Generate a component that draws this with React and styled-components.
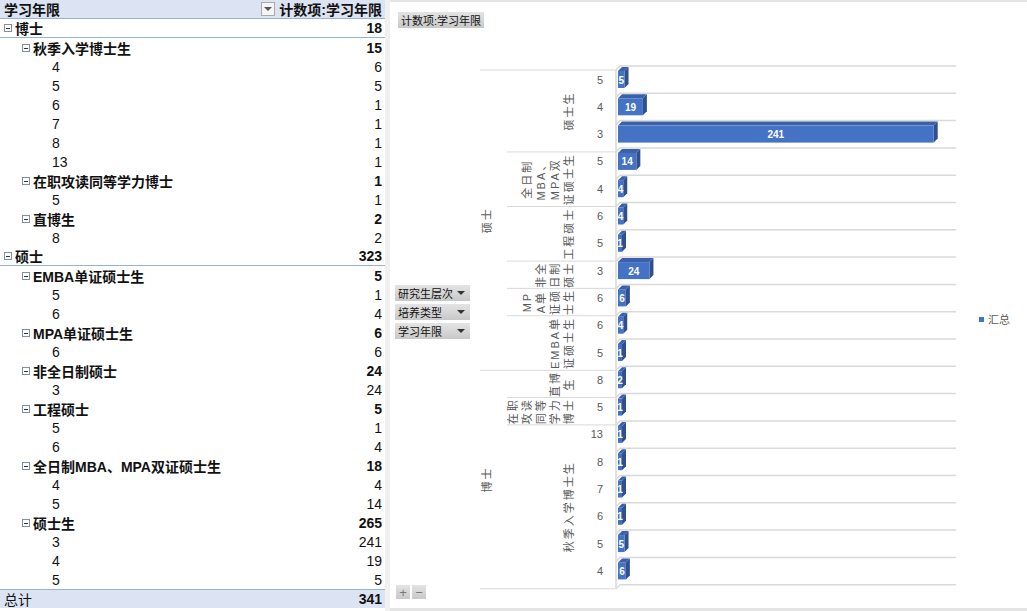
import React from "react";
import styled, { createGlobalStyle } from "styled-components";

const Global = createGlobalStyle`
  html,body{margin:0;padding:0;background:#fff;}
  body{font-family:"Liberation Sans","Noto Sans CJK SC",sans-serif;}
  #root{width:1027px;height:611px;overflow:hidden;}
`;

const Page = styled.div`display:flex;width:1027px;height:611px;`;
const Table = styled.div`width:385px;display:flex;flex-direction:column;border-right:5px solid #f0f0f0;box-sizing:content-box;`;
const Row = styled.div`
  height:19px;display:flex;align-items:center;font-size:14px;color:#111;
  padding-left:${p => p.$indent}px;padding-right:3px;box-sizing:border-box;
  font-weight:${p => (p.$bold ? 700 : 400)};
  background:${p => (p.$head ? "#dce3f2" : "#fff")};
  border-bottom:${p => (p.$line ? "1px solid #95b3d7" : "none")};
  border-top:${p => (p.$top ? "1px solid #95b3d7" : "none")};
`;
const Label = styled.span`flex:1;white-space:nowrap;`;
const Val = styled.span`text-align:right;`;
const Toggle = styled.span`
  width:8px;height:8px;border:1px solid #7f8fa8;margin-right:3px;position:relative;box-sizing:border-box;
  &::after{content:"";position:absolute;left:1px;right:1px;top:3px;height:1px;background:#333;}
`;
const Drop = styled.span`
  width:14px;height:14px;border:1px solid #aaa;background:#f5f5f5;margin-right:4px;display:flex;align-items:center;justify-content:center;box-sizing:border-box;
  &::after{content:"";border:4px solid transparent;border-top:4px solid #555;margin-top:4px;}
`;

const Chart = styled.div`flex:1;position:relative;border-top:2px solid #e4e4e4;border-bottom:3px solid #e4e4e4;`;
const FieldBtn = styled.div`
  position:absolute;left:${p => p.$x}px;top:${p => p.$y}px;width:${p => p.$w}px;height:16px;white-space:nowrap;
  background:linear-gradient(#e4e4e4,#c8c8c8);font-size:11px;color:#111;display:flex;align-items:center;padding-left:3px;box-sizing:border-box;
`;
const Arrow = styled.span`margin-left:auto;margin-right:5px;border:4px solid transparent;border-top:4px solid #333;margin-top:4px;`;

const rows = [
  ["博士",18,0,1],["秋季入学博士生",15,1],["4",6,2],["5",5,2],["6",1,2],["7",1,2],["8",1,2],["13",1,2],
  ["在职攻读同等学力博士",1,1],["5",1,2],["直博生",2,1],["8",2,2],
  ["硕士",323,0,1],["EMBA单证硕士生",5,1],["5",1,2],["6",4,2],["MPA单证硕士生",6,1],["6",6,2],
  ["非全日制硕士",24,1],["3",24,2],["工程硕士",5,1],["5",1,2],["6",4,2],
  ["全日制MBA、MPA双证硕士生",18,1],["4",4,2],["5",14,2],["硕士生",265,1],["3",241,2],["4",19,2],["5",5,2],
];

const bars = [5,19,241,14,4,4,1,24,6,4,1,2,1,1,1,1,1,5,6];
const l2 = ["5","4","3","5","4","6","5","3","6","6","5","8","5","13","8","7","6","5","4"];
const l1 = [
  [3,["硕士生"]],[2,["全日制","MBA、","MPA双","证硕士生"]],[2,["工程硕士"]],[1,["非全","日制","硕士"]],
  [1,["MP","A单","证硕","士生"]],[2,["EMBA单","证硕士生"]],[1,["直博","生"]],[1,["在职","攻读","同等","学力","博士"]],[6,["秋季入学博士生"]],
];
const OX = 226, TOP = 64, H = 27.3;

function ChartSvg() {
  const els = [];
  const gx0 = OX + 4, gx1 = 566;
  for (let i = 0; i <= 19; i++) {
    const y = TOP + i * H;
    els.push(<polyline key={"g"+i} points={`${OX},${y+4} ${gx0},${y} ${gx1},${y}`} fill="none" stroke="#d9d9d9" strokeWidth="1.5"/>);
  }
  els.push(<line key="ax" x1={OX} y1={TOP+4} x2={OX} y2={TOP+19*H+4} stroke="#d9d9d9" strokeWidth="1.5"/>);
  els.push(<line key="b0" x1={90} y1={TOP+4} x2={OX} y2={TOP+4} stroke="#d9d9d9"/>);
  els.push(<line key="b1" x1={90} y1={TOP+19*H+4} x2={OX} y2={TOP+19*H+4} stroke="#d9d9d9"/>);
  els.push(<line key="b2" x1={90} y1={TOP+11*H+4} x2={OX} y2={TOP+11*H+4} stroke="#d9d9d9"/>);
  let idx = 0;
  l1.forEach(([n, lines], k) => {
    const y0 = TOP + idx * H + 4, y1 = TOP + (idx + n) * H + 4;
    if (k > 0 && idx !== 11) els.push(<line key={"l1"+k} x1={117} y1={y0} x2={OX} y2={y0} stroke="#d9d9d9"/>);
    const cy = (y0 + y1) / 2;
    const xr = 183;
    lines.slice().reverse().forEach((t, j) => {
      const x = xr - j * 14;
      els.push(<text key={"t"+k+"_"+j} x={x} y={cy} transform={`rotate(-90 ${x} ${cy})`} textAnchor="middle" fontSize="11" letterSpacing="2" fill="#595959">{t}</text>);
    });
    idx += n;
  });
  [["硕士",0,11],["博士",11,19]].forEach(([t,a,b]) => {
    const cy = TOP + (a+b)/2*H + 4, x = 101;
    els.push(<text key={t} x={x} y={cy} transform={`rotate(-90 ${x} ${cy})`} textAnchor="middle" fontSize="11" letterSpacing="2" fill="#595959">{t}</text>);
  });
  bars.forEach((v, i) => {
    const y = TOP + i * H + 5, h = 17, x = OX + 2, w = Math.max(4, v * 1.31);
    const cy = y + h / 2 + 4;
    els.push(<text key={"n"+i} x={213} y={cy} textAnchor="end" fontSize="11" fill="#595959">{l2[i]}</text>);
    els.push(<polygon key={"s"+i} points={`${x+w},${y} ${x+w+4},${y-4} ${x+w+4},${y+h-4} ${x+w},${y+h}`} fill="#2f4f8f"/>);
    els.push(<polygon key={"tp"+i} points={`${x},${y} ${x+4},${y-4} ${x+w+4},${y-4} ${x+w},${y}`} fill="#3a60a8"/>);
    els.push(<rect key={"r"+i} x={x} y={y} width={w} height={h} fill="#4472c4"/>);
    els.push(<text key={"v"+i} x={x + w/2} y={cy} textAnchor="middle" fontSize="10" fontWeight="700" fill="#fff">{v}</text>);
  });
  els.push(<rect key="lg" x={589} y={315} width={5} height={5} fill="#4472c4"/>);
  els.push(<text key="lt" x={598} y={322} fontSize="11" fill="#595959">汇总</text>);
  return <svg width="637" height="606" style={{position:"absolute",left:0,top:0}}>{els}</svg>;
}

const PM = styled.div`position:absolute;left:${p=>p.$x}px;top:583px;width:14px;height:14px;background:linear-gradient(#e4e4e4,#c8c8c8);color:#777;font-size:13px;display:flex;align-items:center;justify-content:center;`;

export default function App() {
  return (
    <Page>
      <Global/>
      <Table>
        <Row $head $bold $indent={4} $line>
          <Label>学习年限</Label><Drop/><Val>计数项:学习年限</Val>
        </Row>
        {rows.map(([t, v, lvl, line], i) => (
          <Row key={i} $indent={lvl === 0 ? 4 : lvl === 1 ? 22 : 52} $bold={lvl < 2} $line={line}>
            {lvl < 2 && <Toggle/>}
            <Label>{t}</Label><Val>{v}</Val>
          </Row>
        ))}
        <Row $head $top $indent={4}><Label>总计</Label><Val style={{fontWeight:700}}>341</Val></Row>
      </Table>
      <Chart>
        <ChartSvg/>
        <FieldBtn $x={8} $y={10} $w={86}>计数项:学习年限</FieldBtn>
        <FieldBtn $x={5} $y={283} $w={75}>研究生层次<Arrow/></FieldBtn>
        <FieldBtn $x={5} $y={302} $w={75}>培养类型<Arrow/></FieldBtn>
        <FieldBtn $x={5} $y={321} $w={75}>学习年限<Arrow/></FieldBtn>
        <PM $x={6}>+</PM><PM $x={22}>−</PM>
      </Chart>
    </Page>
  );
}
